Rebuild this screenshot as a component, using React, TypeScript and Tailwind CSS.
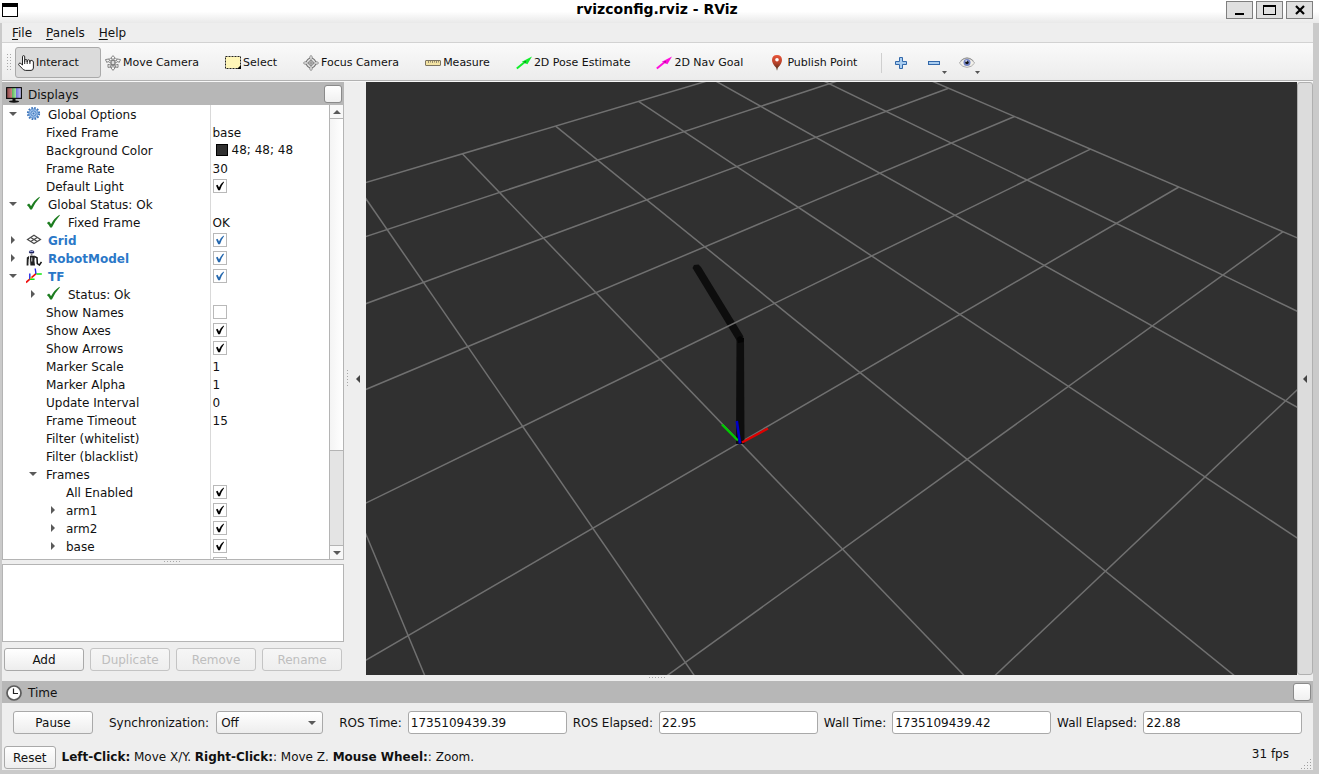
import type { ReactNode } from "react";

/* ---------- icons ---------- */

const WindowIcon = () => (
  <svg width="16" height="14" viewBox="0 0 16 14" shapeRendering="crispEdges">
    <rect width="16" height="14" fill="#000" />
    <rect x="1" y="4" width="14" height="9" fill="#fff" />
  </svg>
);

const HandIcon = () => (
  <svg width="16" height="16" viewBox="0 0 16 16">
    <path
      d="M4.5 10V1.8Q4.5.6 5.6.6T6.7 1.8V6.5V5.4Q7 4.4 8 4.5T9.2 5.6V6.8V5.6Q9.6 4.7 10.6 4.8T11.9 6V7.2V6.1Q12.2 5.3 13.1 5.3Q15.4 5.6 15.4 7V13Q15.2 15.4 13 15.4H7.4Q5.4 15.2 4.4 13.6L1 10.2Q.2 9.3 1 8.5T2.8 8.5Z"
      fill="#fff"
      stroke="#222"
    />
    <path d="M6.7 6V9M9.2 6V9M11.9 6.5V9" stroke="#222" fill="none" />
  </svg>
);

const MoveCameraIcon = () => (
  <svg width="16" height="16" viewBox="0 0 16 16" fill="#fafafa" stroke="#777" strokeWidth="0.9">
    <path d="M8 .6L10.4 3.4H8.9V5.2H7.1V3.4H5.6Z" />
    <path d="M8 15.4L5.6 12.4H7.1V10.4H8.9V12.4H10.4Z" />
    <path d="M.4 4.6L4.6 3.8L3.8 5L6.4 6.4L5.6 7.8L2.8 6.4L2 7.6Z" />
    <path d="M15.6 4.6L11.4 3.8L12.2 5L9.6 6.4L10.4 7.8L13.2 6.4L14 7.6Z" />
    <path d="M3 12.4L3 9.2L4.1 10L6.2 8.6L7 9.8L5 11.1L5.8 12Z" />
    <path d="M13 12.4L13 9.2L11.9 10L9.8 8.6L9 9.8L11 11.1L10.2 12Z" />
    <rect x="6.2" y="5.6" width="3.6" height="4" fill="#ddd" />
  </svg>
);

const SelectIcon = () => (
  <svg width="16" height="14" viewBox="0 0 16 14">
    <rect x="0.5" y="0.5" width="15" height="12" fill="#fff6b8" stroke="#222" strokeDasharray="2 1" />
    <path d="M16 9V13H12Z" fill="#000" />
  </svg>
);

const FocusIcon = () => (
  <svg width="16" height="16" viewBox="0 0 16 16" fill="none" stroke="#777">
    <circle cx="8" cy="8" r="4.8" fill="#e8e8e8" strokeWidth="1.2" />
    <circle cx="8" cy="8" r="2.4" strokeWidth="0.9" />
    <path d="M6.9 4V1.8L8 .4L9.1 1.8V4M6.9 12V14.2L8 15.6L9.1 14.2V12M4 6.9H1.8L.4 8L1.8 9.1H4M12 6.9H14.2L15.6 8L14.2 9.1H12" fill="#fafafa" strokeWidth="0.9" />
    <path d="M8 4V12M4 8H12" strokeWidth="0.8" />
  </svg>
);

const MeasureIcon = () => (
  <svg width="16" height="8" viewBox="0 0 16 8">
    <rect x="0.5" y="1.5" width="15" height="5" rx="0.5" fill="#f3e3a3" stroke="#7c7461" />
    <path d="M3.5 1.5V4M5.5 1.5V3.5M7.5 1.5V4M9.5 1.5V3.5M11.5 1.5V4M13.5 1.5V3.5" stroke="#7c7461" strokeWidth="0.8" />
  </svg>
);

const ArrowIcon = ({ color, dark }: { color: string; dark: string }) => (
  <svg width="16" height="16" viewBox="0 0 16 16">
    <path d="M.8 13.6L8.5 7.2" stroke={color} strokeWidth="2" />
    <path d="M16 1.4L11.4 9.2L9.3 8.2L5.8 6.8Z" fill={color} />
    <path d="M7.5 6.6L10.2 6L9.3 8.4Z" fill={dark} />
  </svg>
);

const PinIcon = () => (
  <svg width="16" height="16" viewBox="0 0 16 16">
    <defs>
      <linearGradient id="pin" x1="0" y1="0" x2="0" y2="1">
        <stop offset="0" stopColor="#e8553a" />
        <stop offset="0.5" stopColor="#b8422a" />
        <stop offset="1" stopColor="#3c2a14" />
      </linearGradient>
    </defs>
    <path d="M8 15.8L7.2 12.8Q3 8.6 3 5Q3.2.2 8 .1Q12.8.2 13 5Q13 8.6 8.8 12.8Z" fill="url(#pin)" />
    <circle cx="8" cy="4.8" r="1.8" fill="#fff" />
  </svg>
);

const PlusIcon = () => (
  <svg width="12" height="12" viewBox="0 0 12 12">
    <path d="M4.5.5H7.5V4.5H11.5V7.5H7.5V11.5H4.5V7.5H.5V4.5H4.5Z" fill="#a9cdf0" stroke="#3268aa" />
  </svg>
);

const MinusIcon = () => (
  <svg width="12" height="12" viewBox="0 0 12 12">
    <rect x="0.5" y="4.5" width="11" height="3" fill="#a9cdf0" stroke="#3268aa" />
  </svg>
);

const EyeIcon = () => (
  <svg width="16" height="12" viewBox="0 0 16 12">
    <path d="M.3 6Q3.5 1.2 8 1.2T15.7 6Q12.5 10.4 8 10.4T.3 6Z" fill="#f2f0ea" stroke="#a8a8a8" strokeWidth="0.9" />
    <path d="M1.5 4Q4.5.8 8 .8T14.5 4" fill="none" stroke="#8f8f8f" strokeWidth="0.9" />
    <circle cx="8" cy="5.6" r="3.5" fill="#7384c4" />
    <circle cx="8" cy="5.6" r="1.7" fill="#111" />
    <circle cx="7.2" cy="4" r="0.8" fill="#fff" />
  </svg>
);

const DisplaysIcon = () => (
  <svg width="16" height="16" viewBox="0 0 16 16">
    <defs>
      <linearGradient id="screen">
        <stop offset="0" stopColor="#8e4a4a" />
        <stop offset="0.32" stopColor="#c87c7c" />
        <stop offset="0.34" stopColor="#58b058" />
        <stop offset="0.62" stopColor="#a0e0a0" />
        <stop offset="0.66" stopColor="#7070d8" />
        <stop offset="1" stopColor="#c4c4f4" />
      </linearGradient>
    </defs>
    <rect width="16" height="12" rx="0.5" fill="#111" />
    <rect x="1.2" y="1.2" width="13.6" height="9.6" fill="url(#screen)" />
    <rect x="6.5" y="12" width="3" height="2" fill="#111" />
    <ellipse cx="8" cy="14.6" rx="5" ry="1.1" fill="#111" />
  </svg>
);

const ClockIcon = () => (
  <svg width="16" height="16" viewBox="0 0 16 16">
    <circle cx="8" cy="8" r="7" fill="#fff" stroke="#5c5c5c" strokeWidth="1.7" />
    <path d="M7.5 3.5V8.5H12" fill="none" stroke="#222" strokeWidth="1.2" />
  </svg>
);

const GearIcon = () => (
  <svg width="16" height="16" viewBox="0 0 16 16">
    <circle cx="7.5" cy="7.5" r="5.6" fill="none" stroke="#3d74ba" strokeWidth="2" strokeDasharray="1.7 1.23" />
    <circle cx="7.5" cy="7.5" r="4.6" fill="#9cc0ea" stroke="#5a8ece" />
    <circle cx="7.5" cy="7.5" r="2.6" fill="#b4d0f0" stroke="#4a80c4" strokeWidth="0.9" />
    <circle cx="7.5" cy="7.5" r="1" fill="#3d74ba" />
  </svg>
);

const OkIcon = () => (
  <svg width="16" height="16" viewBox="0 0 16 16">
    <path d="M.9 9L3 7.6Q4.3 8.8 5 10.3Q8 4.3 13.5.8L13.8 1.5Q9 6.5 5.9 13.6H4.2Q3.2 11 .9 9Z" fill="#1c7c1f" />
  </svg>
);

const GridIcon = () => (
  <svg width="16" height="16" viewBox="0 0 16 16" fill="none" stroke="#4a4a4a" strokeWidth="1.2">
    <path d="M8 3.3L14.5 7.5L8 11.5L1.5 7.5Z" />
    <path d="M4.7 5.4L11.3 9.5M11.3 5.4L4.7 9.5" />
  </svg>
);

const RobotIcon = () => (
  <svg width="16" height="16" viewBox="0 0 16 16">
    <ellipse cx="5.6" cy="1.9" rx="2.8" ry="1.7" fill="#1a1f5a" />
    <rect x="3.6" y="1" width="3.6" height="1" fill="#8d97d8" />
    <rect x="4.8" y="3.6" width="1.6" height="2" fill="#888" />
    <path d="M.8 7.5L3 6V8.5L2.4 15.5H.6Z M3.8 5.8H9L8.4 10.5L9 15.5H4.4Z" fill="#222" />
    <path d="M5.8 7.5V11.5M3.2 9V14" stroke="#ddd" />
    <path d="M8.8 6.6L11 7.8L11.3 13.6L13.4 15L15.5 11.8" fill="none" stroke="#111" strokeWidth="1.5" />
  </svg>
);

const TfIcon = () => (
  <svg width="16" height="16" viewBox="0 0 16 16" fill="none" strokeWidth="1.4">
    <path d="M0 14.5L3.8 11.2M5 10.2L10 5.6" stroke="#f01010" strokeWidth="1.7" />
    <path d="M3.8 11.2V5.5M10 6L9.2 .5" stroke="#2424e8" />
    <path d="M3.8 11.2H8.6M10.4 6H15.8" stroke="#10e810" />
    <path d="M4.3 10.6L6 9.2" stroke="#e8b020" />
  </svg>
);

const Down = () => (
  <svg width="8" height="4" viewBox="0 0 8 4">
    <path d="M0 0H8L4 4Z" fill="#5a5a5a" />
  </svg>
);

const Up = () => (
  <svg width="8" height="4" viewBox="0 0 8 4">
    <path d="M0 4H8L4 0Z" fill="#5a5a5a" />
  </svg>
);

const Right = () => (
  <svg width="4" height="8" viewBox="0 0 4 8">
    <path d="M0 0V8L4 4Z" fill="#5a5a5a" />
  </svg>
);

const Left = () => (
  <svg width="4" height="8" viewBox="0 0 4 8">
    <path d="M4 0V8L0 4Z" fill="#444" />
  </svg>
);

const MenuMark = () => (
  <svg width="5" height="3" viewBox="0 0 5 3">
    <path d="M0 0H5L2.5 3Z" fill="#555" />
  </svg>
);

// dotted drag handle
function Dots({ cols, rows, step = 3 }: { cols: number; rows: number; step?: number }) {
  const dots = [];
  for (let r = 0; r < rows; r++) {
    for (let c = 0; c < cols; c++) {
      dots.push(<rect key={`${r}-${c}`} x={c * step} y={r * step} width="1" height="1" fill="#a8a8a8" />);
    }
  }
  return (
    <svg width={cols * step} height={rows * step} shapeRendering="crispEdges">
      {dots}
    </svg>
  );
}

/* ---------- tree data ---------- */

type Row = {
  name: string;
  depth: number;
  open?: boolean;
  icon?: ReactNode;
  value?: string;
  check?: boolean;
  color?: string;
  display?: boolean;
};

const ROWS: Row[] = [
  { name: "Global Options", depth: 0, open: true, icon: <GearIcon /> },
  { name: "Fixed Frame", depth: 1, value: "base" },
  { name: "Background Color", depth: 1, value: "48; 48; 48", color: "#303030" },
  { name: "Frame Rate", depth: 1, value: "30" },
  { name: "Default Light", depth: 1, check: true },
  { name: "Global Status: Ok", depth: 0, open: true, icon: <OkIcon /> },
  { name: "Fixed Frame", depth: 1, icon: <OkIcon />, value: "OK" },
  { name: "Grid", depth: 0, open: false, icon: <GridIcon />, check: true, display: true },
  { name: "RobotModel", depth: 0, open: false, icon: <RobotIcon />, check: true, display: true },
  { name: "TF", depth: 0, open: true, icon: <TfIcon />, check: true, display: true },
  { name: "Status: Ok", depth: 1, open: false, icon: <OkIcon /> },
  { name: "Show Names", depth: 1, check: false },
  { name: "Show Axes", depth: 1, check: true },
  { name: "Show Arrows", depth: 1, check: true },
  { name: "Marker Scale", depth: 1, value: "1" },
  { name: "Marker Alpha", depth: 1, value: "1" },
  { name: "Update Interval", depth: 1, value: "0" },
  { name: "Frame Timeout", depth: 1, value: "15" },
  { name: "Filter (whitelist)", depth: 1 },
  { name: "Filter (blacklist)", depth: 1 },
  { name: "Frames", depth: 1, open: true },
  { name: "All Enabled", depth: 2, check: true },
  { name: "arm1", depth: 2, open: false, check: true },
  { name: "arm2", depth: 2, open: false, check: true },
  { name: "base", depth: 2, open: false, check: true },
  { name: "", depth: 2, check: true },
];

const INDENT = ["pl-0", "pl-5", "pl-10"];

function TreeRow({ row, id }: { row: Row; id: string }) {
  return (
    <tr className="h-[18px]">
      <td className="p-0">
        <div className={`flex h-[18px] items-center ${INDENT[row.depth]}`}>
          <span className="flex w-5 shrink-0 justify-center">
            {row.open === true && <Down />}
            {row.open === false && <Right />}
          </span>
          {row.icon && <span className="mx-[3px] shrink-0">{row.icon}</span>}
          <label htmlFor={id} className={`ml-[3px] pt-[2px] whitespace-nowrap ${row.display ? "font-bold text-[#2b78c8]" : ""}`}>
            {row.name}
          </label>
        </div>
      </td>
      <td className="border-l border-[#d9d9d9] p-0 pl-[2px]">
        <div className="flex h-[18px] items-center">
          {row.color && <span className="mr-1 ml-[3px] size-3 border border-black" style={{ background: row.color }} />}
          {row.value && <span className={`whitespace-nowrap ${row.color ? "" : "pt-[2px]"}`}>{row.value}</span>}
          {row.check !== undefined && (
            <span className="grid size-[14px] place-items-center">
              <input
                id={id}
                type="checkbox"
                defaultChecked={row.check}
                className="peer size-[14px] appearance-none border border-[#b9b9b9] bg-white [grid-area:1/1]"
              />
              <svg
                viewBox="0 0 14 14"
                className={`pointer-events-none invisible size-[14px] peer-checked:visible [grid-area:1/1] ${row.display ? "text-[#2467ae]" : "text-black"}`}
              >
                <path d="M3 6.4L4.6 5.8L6 8.4Q7.5 4.8 10.6 2.6L11 3.2Q8.4 6.6 7 11.2H5.2Z" fill="currentColor" />
              </svg>
            </span>
          )}
        </div>
      </td>
    </tr>
  );
}

/* ---------- panels ---------- */

function PanelHeader({ icon, title }: { icon: ReactNode; title: string }) {
  return (
    <div className="flex shrink-0 items-center pr-[2px] pl-1">
      <div className="flex flex-1 items-center gap-[6px] pt-[2px]">
        {icon}
        <h2>{title}</h2>
      </div>
      <button
        type="button"
        aria-label={`Close ${title}`}
        className="size-[18px] rounded-[3px] border border-[#8a8a8a] bg-linear-to-b from-white to-[#f0f0f0]"
      />
    </div>
  );
}

function PushButton({ children, disabled, className = "" }: { children: ReactNode; disabled?: boolean; className?: string }) {
  return (
    <button
      type="button"
      disabled={disabled}
      className={`rounded-[3px] border border-[#a9a9a9] bg-linear-to-b from-white to-[#ededed] pt-[2px] leading-[19px] disabled:border-[#c4c4c4] disabled:from-[#f6f6f6] disabled:to-[#eeeeee] disabled:text-[#bebebe] ${className}`}
    >
      {children}
    </button>
  );
}

function DisplaysPanel() {
  return (
    <section className="flex w-[342px] shrink-0 flex-col">
      <div className="flex h-[23px] flex-col justify-center bg-[#b7b7b7]">
        <PanelHeader icon={<DisplaysIcon />} title="Displays" />
      </div>
      <div className="flex min-h-0 flex-1 overflow-hidden border border-t-0 border-[#b4b4b4] bg-white">
        <div className="min-h-0 flex-1 overflow-hidden">
          <table className="w-full table-fixed border-collapse">
            <colgroup>
              <col className="w-[207px]" />
              <col />
            </colgroup>
            <tbody>
              {ROWS.map((row, i) => (
                <TreeRow key={i} row={row} id={`prop-${i}`} />
              ))}
            </tbody>
          </table>
        </div>
        <div className="flex w-[14px] shrink-0 flex-col border-l border-[#b4b4b4] bg-[#e4e4e4]">
          <button type="button" aria-label="Scroll up" className="flex h-[13px] items-center justify-center bg-[#f8f8f8]">
            <Up />
          </button>
          <div className="flex-1">
            <div className="h-[78%] border-y border-[#b4b4b4] bg-linear-to-r from-[#f4f4f4] to-white" />
          </div>
          <button type="button" aria-label="Scroll down" className="flex h-[14px] items-center justify-center border-t border-[#b4b4b4] bg-[#f8f8f8]">
            <Down />
          </button>
        </div>
      </div>
      <div className="flex h-1 shrink-0 justify-center pt-px">
        <Dots cols={6} rows={1} />
      </div>
      <div className="h-[78px] shrink-0 border border-[#b4b4b4] bg-white" />
      <div className="grid shrink-0 grid-cols-4 gap-[6px] px-[2px] pt-[6px] pb-1">
        <PushButton>Add</PushButton>
        <PushButton disabled>Duplicate</PushButton>
        <PushButton disabled>Remove</PushButton>
        <PushButton disabled>Rename</PushButton>
      </div>
    </section>
  );
}

/* ---------- 3D view ---------- */

// ground plane -> view, perspective camera
function project(u: number, v: number): [number, number] {
  const w = 1 + 0.1014 * u + 0.1237 * v;
  return [(374 + 170.19 * u - 43.61 * v) / w, (360.5 - 40.45 * u - 48.85 * v) / w];
}

const CELLS = [-5, -4, -3, -2, -1, 0, 1, 2, 3, 4, 5];
const NEAR = 0.05;

function gridLines() {
  return CELLS.flatMap((k) => {
    // cut the line where it passes behind the camera
    const v0 = Math.max(-5, (NEAR - 1 - 0.1014 * k) / 0.1237);
    const u0 = Math.max(-5, (NEAR - 1 - 0.1237 * k) / 0.1014);
    return [
      [project(k, v0), project(k, 5)],
      [project(u0, k), project(5, k)],
    ];
  });
}

function Scene() {
  return (
    <div className="min-w-0 flex-1 overflow-hidden bg-[#303030]">
      <svg viewBox="0 0 931 593" preserveAspectRatio="xMidYMid slice" className="block size-full">
        <path d="M326.5 186L328 183L332.5 182.5L335 185L377.5 254.5L371 259Z" fill="#0d0d0d" />
        <g stroke="#707070" strokeWidth="1.5">
          {gridLines().map(([a, b], i) => (
            <line key={i} x1={a[0]} y1={a[1]} x2={b[0]} y2={b[1]} />
          ))}
        </g>
        <path d="M370.5 256H378L378.5 362H370Z" fill="#0d0d0d" />
        <path d="M371 256L374 254L378 256L377.5 260L372 261Z" fill="#040404" />
        <path d="M376 360.5L402 346.5" stroke="#dd0000" strokeWidth="2.4" />
        <path d="M372 358.5L356 342.5" stroke="#00cc00" strokeWidth="2.4" />
        <path d="M374 361.5L370.8 339" stroke="#0000c8" strokeWidth="2.6" />
      </svg>
    </div>
  );
}

/* ---------- toolbar ---------- */

const TOOLS = [
  { name: "Interact", icon: <HandIcon />, active: true },
  { name: "Move Camera", icon: <MoveCameraIcon /> },
  { name: "Select", icon: <SelectIcon /> },
  { name: "Focus Camera", icon: <FocusIcon /> },
  { name: "Measure", icon: <MeasureIcon /> },
  { name: "2D Pose Estimate", icon: <ArrowIcon color="#12ee2c" dark="#0b8a1a" /> },
  { name: "2D Nav Goal", icon: <ArrowIcon color="#ff10dc" dark="#b00a98" /> },
  { name: "Publish Point", icon: <PinIcon /> },
];

function Toolbar() {
  return (
    <div className="flex h-[39px] shrink-0 items-center border-t border-b border-t-[#d2d2d2] border-b-[#b2b2b2] bg-linear-to-b from-[#fafafa] to-[#ececec] pt-[2px] pl-[5px] text-[11px]">
      <Dots cols={2} rows={6} />
      <div className="ml-[2px] flex gap-px">
        {TOOLS.map((t) => (
          <button
            key={t.name}
            type="button"
            className={`flex h-[31px] items-center gap-[2px] rounded-[3px] border pr-[21px] pl-[2px] whitespace-nowrap ${
              t.active ? "border-[#aaaaaa] bg-[#dbdbdb]" : "border-transparent"
            }`}
          >
            <span className="flex w-4 justify-center">{t.icon}</span>
            <span className="pt-px">{t.name}</span>
          </button>
        ))}
      </div>
      <span className="ml-[2px] h-5 w-px bg-[#cfcfcf]" />
      <button type="button" aria-label="Add tool" className="ml-[13px]">
        <PlusIcon />
      </button>
      <button type="button" aria-label="Remove tool" className="ml-[21px] flex">
        <MinusIcon />
        <span className="mt-[14px] -mb-2 ml-[2px]">
          <MenuMark />
        </span>
      </button>
      <button type="button" aria-label="Tool visibility" className="ml-3 flex">
        <EyeIcon />
        <span className="mt-[14px] -mb-2">
          <MenuMark />
        </span>
      </button>
    </div>
  );
}

/* ---------- time ---------- */

const TIMES = [
  { id: "ros-time", label: "ROS Time:", value: "1735109439.39" },
  { id: "ros-elapsed", label: "ROS Elapsed:", value: "22.95" },
  { id: "wall-time", label: "Wall Time:", value: "1735109439.42" },
  { id: "wall-elapsed", label: "Wall Elapsed:", value: "22.88" },
];

function TimePanel() {
  return (
    <section className="shrink-0">
      <div className="flex h-[22px] flex-col justify-center bg-[#b7b7b7]">
        <PanelHeader icon={<ClockIcon />} title="Time" />
      </div>
      <div className="flex items-center gap-[6px] px-[11px] pt-2 pb-[10px]">
        <PushButton className="mr-[10px] w-20 shrink-0">Pause</PushButton>
        <label htmlFor="sync" className="shrink-0 pt-px">Synchronization:</label>
        <div className="mr-[10px] ml-px grid w-[107px] shrink-0 items-center">
          <select
            id="sync"
            defaultValue="Off"
            className="h-[23px] w-full appearance-none rounded-[3px] border border-[#a9a9a9] bg-linear-to-b from-white to-[#ededed] px-1 [grid-area:1/1]"
          >
            <option>Off</option>
          </select>
          <span className="pointer-events-none mr-[7px] justify-self-end [grid-area:1/1]">
            <Down />
          </span>
        </div>
        {TIMES.map((t) => (
          <div key={t.id} className="contents">
            <label htmlFor={t.id} className="shrink-0 pt-px whitespace-nowrap">{t.label}</label>
            <input
              id={t.id}
              defaultValue={t.value}
              readOnly
              className="h-[23px] w-0 min-w-0 flex-1 rounded-[3px] border border-[#a9a9a9] bg-white px-[2px]"
            />
          </div>
        ))}
      </div>
    </section>
  );
}

function StatusBar() {
  return (
    <footer className="flex h-[26px] shrink-0 items-start pt-[2px] pl-[2px]">
      <PushButton className="px-2">Reset</PushButton>
      <p className="ml-[6px] flex-1 pt-px leading-5">
        <b>Left-Click:</b> Move X/Y. <b>Right-Click:</b>: Move Z. <b>Mouse Wheel:</b>: Zoom.
      </p>
      <span className="mr-[11px] leading-4">31 fps</span>
      <svg width="12" height="12" className="mr-px self-end" shapeRendering="crispEdges">
        <path d="M10 1h1v1h-1zM7 4h1v1h-1zM10 4h1v1h-1zM4 7h1v1h-1zM7 7h1v1h-1zM10 7h1v1h-1zM1 10h1v1h-1zM4 10h1v1h-1zM7 10h1v1h-1zM10 10h1v1h-1z" fill="#a0a0a0" />
      </svg>
    </footer>
  );
}

/* ---------- window ---------- */

const winBtn = "flex h-[18px] w-[27px] items-center justify-center border border-[#7f7f7f] bg-[#e0e0e0]";

function TitleBar() {
  return (
    <header className="flex h-[23px] shrink-0 items-start bg-linear-to-b from-white from-50% to-[#e9e9e9] pr-[6px]">
      <span className="w-[88px] pt-[3px] pl-[2px]">
        <WindowIcon />
      </span>
      <h1 className="flex-1 text-center text-[14px] leading-[19px] font-bold text-black">rvizconfig.rviz - RViz</h1>
      <div className="flex gap-[3px] pt-px">
        <button type="button" aria-label="Minimize" className={winBtn}>
          <svg width="13" height="12" shapeRendering="crispEdges"><rect x="2" y="9" width="9" height="2" /></svg>
        </button>
        <button type="button" aria-label="Maximize" className={winBtn}>
          <svg width="13" height="10" shapeRendering="crispEdges"><path d="M0 0H13V10H0ZM1 2V9H12V2Z" fillRule="evenodd" /></svg>
        </button>
        <button type="button" aria-label="Close" className={winBtn}>
          <svg width="10" height="10"><path d="M1 1L9 9M9 1L1 9" stroke="#000" strokeWidth="2.2" /></svg>
        </button>
      </div>
    </header>
  );
}

export default function App() {
  return (
    <div className="flex h-screen flex-col bg-[#eeeeee] font-['DejaVu_Sans',sans-serif] text-[12px] leading-[18px] text-[#111]">
      <TitleBar />
      <div className="flex min-h-0 flex-1 flex-col border-r-6 border-b-4 border-l-2 border-[#cacaca]">
        <nav className="flex h-[19px] shrink-0 items-center pl-[3px]">
          {["File", "Panels", "Help"].map((m) => (
            <button key={m} type="button" className="px-[7px]">
              <span className="underline underline-offset-2">{m[0]}</span>
              {m.slice(1)}
            </button>
          ))}
        </nav>
        <Toolbar />
        <main className="flex min-h-0 flex-1 border-t border-[#f8f8f8]">
          <DisplaysPanel />
          <div className="flex w-[22px] shrink-0 items-center pl-[3px]">
            <Dots cols={1} rows={6} />
            <span className="ml-[6px]"><Left /></span>
          </div>
          <Scene />
          <div className="flex w-4 shrink-0 items-center justify-center rounded-[3px] border border-[#b0b0b0] bg-[#dcdcdc]">
            <Left />
          </div>
        </main>
        <div className="flex h-[6px] shrink-0 justify-center pt-[2px]">
          <Dots cols={6} rows={1} />
        </div>
        <TimePanel />
        <StatusBar />
      </div>
    </div>
  );
}
